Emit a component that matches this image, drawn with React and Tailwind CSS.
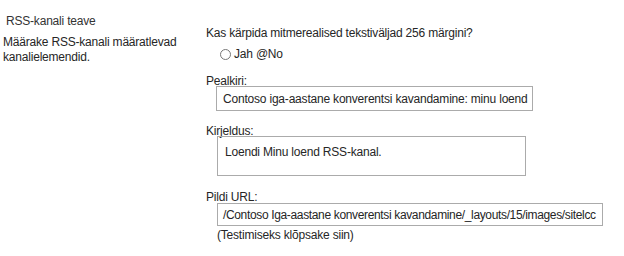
export default function App() {
  const font = { fontFamily: '"Liberation Sans", Arial, sans-serif' }
  return (
    <div className="flex w-[624px] h-[256px] bg-white text-[12px] tracking-[-0.2px] leading-[16px] text-[#262626]" style={font}>
      {/* Left: section title + description */}
      <div className="w-[206px] shrink-0">
        <div className="pt-[13px] pl-[6px] text-[#333]">RSS-kanali teave</div>
        <div className="mt-[6px] pl-[3px] w-[190px] leading-[15px]">
          Määrake RSS-kanali määratlevad kanalielemendid.
        </div>
      </div>

      {/* Right: form fields */}
      <div className="flex flex-col pt-[25px]">
        <div>Kas kärpida mitmerealised tekstiväljad 256 märgini?</div>
        <div className="mt-[5px] ml-[14px] flex items-center gap-[3px]">
          <span className="inline-block w-[11px] h-[11px] rounded-full border border-[#777] bg-white" />
          <span>Jah @No</span>
        </div>

        <div className="mt-[11px]">Pealkiri:</div>
        <div className="mt-[-3px] ml-[10px] w-[317px] h-[25px] border border-[#ababab] pl-[6px] pt-[4px] whitespace-nowrap">
          Contoso iga-aastane konverentsi kavandamine: minu loend
        </div>

        <div className="mt-[12px]">Kirjeldus:</div>
        <div className="mt-[-3px] ml-[11px] w-[309px] h-[40px] border border-[#ababab] pl-[7px] pt-[7px]">
          Loendi Minu loend RSS-kanal.
        </div>

        <div className="mt-[13px]">Pildi URL:</div>
        <div className="mt-[-2px] ml-[11px] w-[386px] h-[23px] border border-[#ababab] pl-[5px] pt-[3px] tracking-[-0.35px] whitespace-nowrap overflow-hidden">
          /Contoso Iga-aastane konverentsi kavandamine/_layouts/15/images/sitelcc
        </div>
        <div className="mt-[1px] ml-[11px]">(Testimiseks klõpsake siin)</div>
      </div>
    </div>
  )
}
